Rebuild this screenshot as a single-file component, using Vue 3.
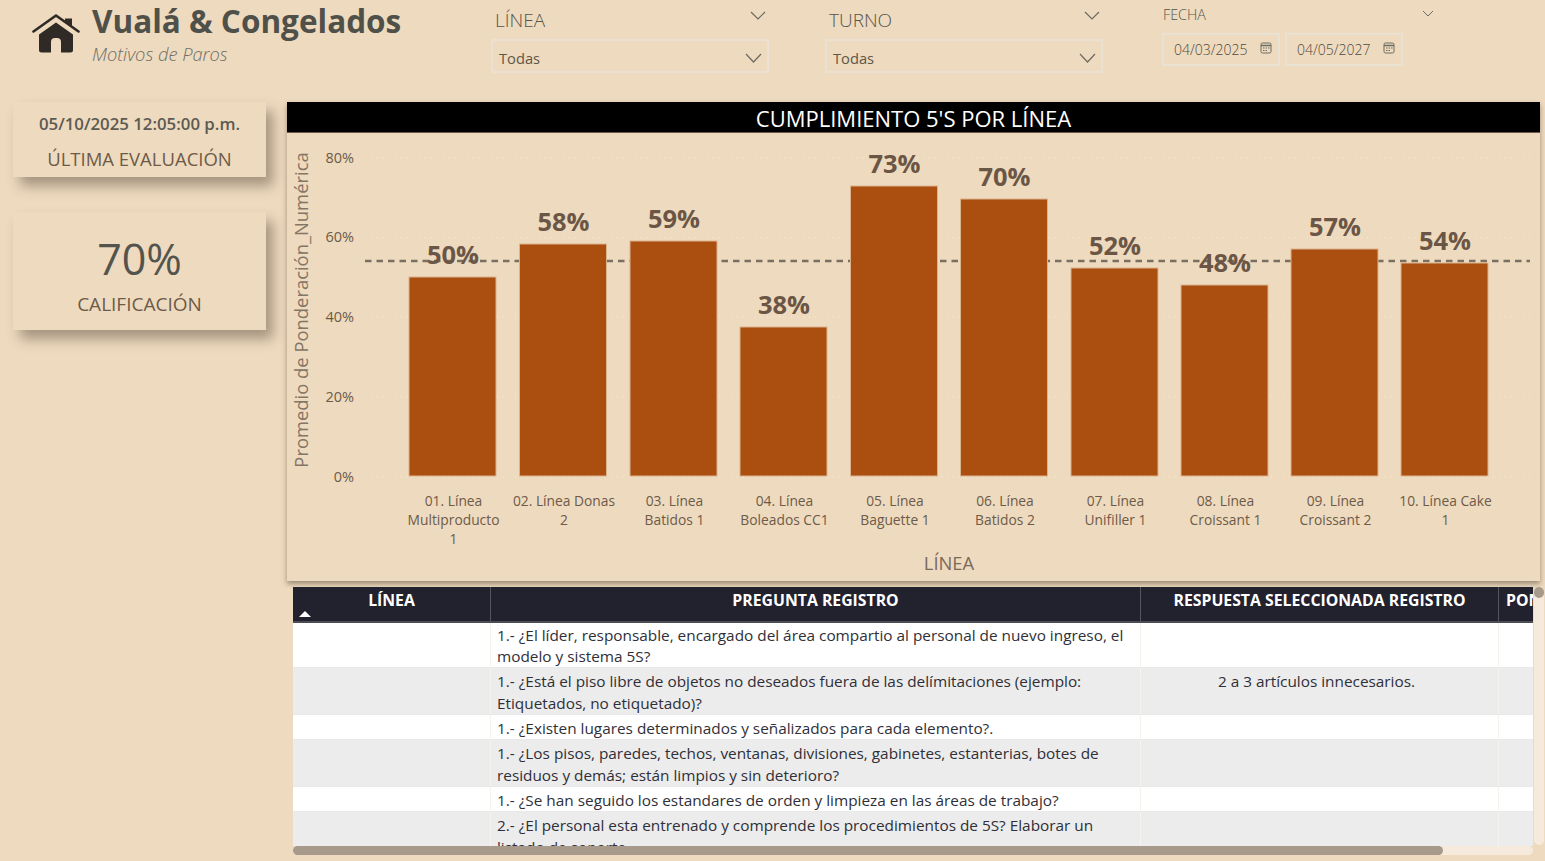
<template>
  <div class="page">
    <header class="top">
      <svg class="home" viewBox="0 0 48 42" width="48" height="42">
        <path d="M1.5 18.5 24 2.5l22.5 16" fill="none" stroke="#2f2a25" stroke-width="2.6" stroke-linecap="round" stroke-linejoin="round" />
        <path d="M33 5.500h7v9l-7-5z" fill="#2f2a25" />
        <path d="M7 21.500 24 9.500l17 12V37a2.500 2.500 0 0 1-2.500 2.500H29V29a4 4 0 0 0-4-4h-2a4 4 0 0 0-4 4v10.500H9.500A2.500 2.500 0 0 1 7 37z" fill="#2f2a25" />
      </svg>
      <div class="brand">
        <h1>Vualá &amp; Congelados</h1>
        <p>Motivos de Paros</p>
      </div>
      <div class="slicer" v-for="s in slicers" :key="s">
        <div class="slicer-head">
          <span>{{ s }}</span>
          <svg width="16" height="9" viewBox="0 0 16 9"><path d="M1 1l7 7 7-7" fill="none" stroke="#6b6b60" stroke-width="1.2" /></svg>
        </div>
        <div class="slicer-box">
          <span>Todas</span>
          <svg width="17" height="10" viewBox="0 0 17 10"><path d="M1 1l7.500 8L16 1" fill="none" stroke="#6b6b60" stroke-width="1.2" /></svg>
        </div>
      </div>
      <div class="dates">
        <div class="dates-head">
          <span>FECHA</span>
          <svg width="12" height="7" viewBox="0 0 12 7"><path d="M1 1l5 5 5-5" fill="none" stroke="#6b6b60" stroke-width="1" /></svg>
        </div>
        <div class="dates-row">
          <div class="date-box" v-for="d in dates" :key="d">
            <span>{{ d }}</span>
            <svg width="12" height="12" viewBox="0 0 12 12">
              <rect x="1" y="1" width="10" height="10" rx="1.500" fill="none" stroke="#6b6b60" />
              <path d="M1 3.500h10" stroke="#6b6b60" stroke-width="1.500" />
              <path d="M3 6h1.500M5.500 6H7M8 6h1.500M3 8.500h1.500M5.500 8.500H7" stroke="#6b6b60" />
            </svg>
          </div>
        </div>
      </div>
    </header>

    <main class="body">
      <aside class="side">
        <div class="card card-date">
          <strong>05/10/2025 12:05:00 p.m.</strong>
          <span>ÚLTIMA EVALUACIÓN</span>
        </div>
        <div class="card card-score">
          <b>70%</b>
          <span>CALIFICACIÓN</span>
        </div>
      </aside>

      <div class="content">
        <section class="chart">
          <h2>CUMPLIMIENTO 5'S POR LÍNEA</h2>
          <svg class="plot" width="1253" height="448" viewBox="0 0 1253 448">
            <text class="y-title" transform="translate(21 177) rotate(-90)" text-anchor="middle">Promedio de Ponderación_Numérica</text>
            <g v-for="t in ticks" :key="t.label">
              <line class="grid" x1="78" x2="1243" :y1="t.y" :y2="t.y" />
              <text class="tick" x="67" :y="t.y + 4.5" text-anchor="end">{{ t.label }}</text>
            </g>
            <line class="avg" x1="78" x2="1243" y1="128" y2="128" />
            <g v-for="b in bars" :key="b.x">
              <rect class="bar" :x="b.x" :y="b.top" width="87" :height="343 - b.top" />
              <text class="cat" v-for="(l, i) in b.lines" :key="l" :x="b.x + 44.5" :y="372.5 + i * 19" text-anchor="middle">{{ l }}</text>
            </g>
            <text class="val" v-for="b in bars" :key="b.value" :x="b.x + 44" :y="b.top - 13" text-anchor="middle">{{ b.value }}%</text>
            <text class="x-title" x="662" y="437" text-anchor="middle">LÍNEA</text>
          </svg>
        </section>

        <section class="table-wrap">
          <div class="table">
            <div class="row head">
              <div class="cell">LÍNEA<i class="sort"></i></div>
              <div class="cell">PREGUNTA REGISTRO</div>
              <div class="cell">RESPUESTA SELECCIONADA REGISTRO</div>
              <div class="cell clip">PONDERACIÓN</div>
            </div>
            <div class="row" v-for="(r, i) in rows" :key="i" :class="{ alt: i % 2 === 1, first: i === 0 }">
              <div class="cell"></div>
              <div class="cell">{{ r.q }}</div>
              <div class="cell answer">{{ r.a }}</div>
              <div class="cell"></div>
            </div>
          </div>
          <div class="hbar"><div class="hthumb"></div></div>
          <div class="vbar"><div class="vthumb"></div></div>
        </section>
      </div>
    </main>
  </div>
</template>

<script setup>
const slicers = ["LÍNEA", "TURNO"]
const dates = ["04/03/2025", "04/05/2027"]

const ticks = [
  { label: "80%", y: 25 },
  { label: "60%", y: 104.5 },
  { label: "40%", y: 184 },
  { label: "20%", y: 264 },
  { label: "0%", y: 344 },
]

const bars = [
  { x: 122, top: 144, value: 50, lines: ["01. Línea", "Multiproducto", "1"] },
  { x: 232.5, top: 111, value: 58, lines: ["02. Línea Donas", "2"] },
  { x: 343, top: 108, value: 59, lines: ["03. Línea", "Batidos 1"] },
  { x: 453, top: 194, value: 38, lines: ["04. Línea", "Boleados CC1"] },
  { x: 563.5, top: 53, value: 73, lines: ["05. Línea", "Baguette 1"] },
  { x: 673.5, top: 66, value: 70, lines: ["06. Línea", "Batidos 2"] },
  { x: 784, top: 135, value: 52, lines: ["07. Línea", "Unifiller 1"] },
  { x: 894, top: 152, value: 48, lines: ["08. Línea", "Croissant 1"] },
  { x: 1004, top: 116, value: 57, lines: ["09. Línea", "Croissant 2"] },
  { x: 1114, top: 130, value: 54, lines: ["10. Línea Cake", "1"] },
]

const rows = [
  { q: "1.- ¿El líder, responsable, encargado del área compartio al personal de nuevo ingreso, el modelo y sistema 5S?", a: "" },
  { q: "1.- ¿Está el piso libre de objetos no deseados fuera de las delímitaciones (ejemplo: Etiquetados, no etiquetado)?", a: "2 a 3 artículos innecesarios." },
  { q: "1.- ¿Existen lugares determinados y señalizados para cada elemento?.", a: "" },
  { q: "1.- ¿Los pisos, paredes, techos, ventanas, divisiones, gabinetes, estanterias, botes de residuos y demás; están limpios y sin deterioro?", a: "" },
  { q: "1.- ¿Se han seguido los estandares de orden y limpieza en las áreas de trabajo?", a: "" },
  { q: "2.- ¿El personal esta entrenado y comprende los procedimientos de 5S? Elaborar un listado de soporte.", a: "" },
]
</script>

<style>
html, body { margin: 0; background: #eedabf; }
</style>

<style scoped>
.page {
  width: 1545px;
  height: 861px;
  overflow: hidden;
  background: #eedabf;
  font-family: "Open Sans", "Noto Sans", sans-serif;
  color: #6d5a48;
}

.top {
  display: flex;
  height: 102px;
  box-sizing: border-box;
  padding-left: 32px;
}
.home { margin-top: 13px; flex: none; }
.brand { width: 399px; margin-left: 12px; flex: none; }
.brand h1 {
  margin: 0;
  font-size: 31.500px;
  line-height: 42px;
  font-weight: 700;
  color: #4f5049;
  white-space: nowrap;
}
.brand p {
  margin: 1px 0 0;
  font-size: 18.300px;
  line-height: 22px;
  font-style: italic;
  font-weight: 300;
  color: #6e6e66;
}

.slicer { width: 278px; margin-right: 56px; flex: none; }
.slicer-head {
  display: flex;
  justify-content: space-between;
  align-items: center;
  height: 39px;
  padding: 0 3px 0 4px;
  font-size: 19px;
  font-weight: 300;
  color: #55554c;
}
.slicer-head svg { margin: -8px 0 0; }
.slicer-box {
  display: flex;
  justify-content: space-between;
  align-items: center;
  height: 34px;
  box-sizing: border-box;
  padding: 3px 5px 0 6px;
  border: 2px solid #e9e2d3;
  font-size: 14.700px;
  color: #5f5647;
}

.dates { margin-left: 3px; width: 278px; flex: none; }
.dates-head {
  display: flex;
  justify-content: space-between;
  height: 33px;
  padding: 5px 6px 0 1px;
  box-sizing: border-box;
  font-size: 14.300px;
  font-weight: 300;
  color: #55554c;
}
.dates-head svg { margin-top: 5px; }
.dates-row { display: flex; gap: 5px; }
.date-box {
  display: flex;
  align-items: center;
  justify-content: space-between;
  width: 118px;
  height: 33px;
  box-sizing: border-box;
  padding: 0 6px 0 10px;
  border: 2px solid #e9e2d3;
  font-size: 14px;
  font-weight: 300;
  color: #4f4a3e;
}
.date-box svg { margin-top: -4px; }

.body { display: flex; }
.side {
  width: 287px;
  flex: none;
  box-sizing: border-box;
  padding-left: 13px;
}
.card {
  width: 253px;
  display: flex;
  flex-direction: column;
  align-items: center;
  background: #eedabf;
  box-shadow: 7px 9px 12px rgba(80, 65, 50, 0.45);
  text-align: center;
}
.card-date { height: 75px; }
.card-date strong {
  margin-top: 10px;
  font-size: 16.800px;
  line-height: 24px;
  font-weight: 600;
  color: #5c5a52;
}
.card-date span {
  margin-top: 11px;
  font-size: 18.500px;
  line-height: 24px;
}
.card-score { height: 118px; margin-top: 35px; }
.card-score b {
  margin-top: 18px;
  font-size: 43px;
  line-height: 58px;
  font-weight: 400;
  color: #54544e;
}
.card-score span {
  margin-top: 4px;
  font-size: 19px;
  line-height: 24px;
}

.content { width: 1253px; flex: none; }
.chart {
  height: 479px;
  background: #eedabf;
  box-shadow: 0 3px 5px rgba(80, 65, 50, 0.5);
}
.chart h2 {
  margin: 0;
  height: 31px;
  background: #000;
  border-bottom: 1px solid #6d5a48;
  box-sizing: border-box;
  color: #fff;
  font-size: 22px;
  font-weight: 400;
  line-height: 33px;
  text-align: center;
}
.plot { display: block; }
.y-title { font-size: 18.400px; fill: #857565; }
.tick { font-size: 14.500px; fill: #6d5a48; }
.cat { font-size: 13.800px; fill: #6d5a48; }
.x-title { font-size: 18.400px; fill: #7a6a5a; }
.val { font-size: 25.500px; font-weight: 700; fill: #6b5645; }
.grid { stroke: #f6ecdc; stroke-width: 1; stroke-dasharray: 1 5; }
.avg { stroke: #7a6f60; stroke-width: 2.500; stroke-dasharray: 6.500 5; }
.bar { fill: #ab4f10; stroke: #dcb38f; stroke-width: 1; }

.table-wrap {
  position: relative;
  height: 269px;
  margin: 6px 0 0 6px;
}
.table {
  width: 1240px;
  height: 259px;
  overflow: hidden;
  background: #ececec;
  font-size: 15.350px;
  line-height: 22px;
  color: #2f2f38;
}
.row {
  display: grid;
  grid-template-columns: 198px 650px 358px 34px;
  background: #fff;
  border-bottom: 1px solid #e9e9e9;
}
.row.alt { background: #ececec; }
.row.first { line-height: 21px; }
.cell {
  box-sizing: border-box;
  padding: 2px 12px 0 6px;
  border-right: 1px solid #f6f3ec;
}
.cell:last-child { border-right: none; }
.answer { text-align: center; }
.head {
  height: 36px;
  background: #22212e;
  border-bottom: 2px solid #4c4c55;
  color: #fff;
  font-weight: 700;
  box-sizing: border-box;
  font-size: 15.800px;
}
.head .cell {
  position: relative;
  padding: 2px 0 0;
  text-align: center;
  border-right: 1px solid #55555e;
  white-space: nowrap;
  overflow: hidden;
}
.head .clip { padding-left: 7px; text-align: left; border-right: none; }
.sort {
  position: absolute;
  left: 6px;
  bottom: 4px;
  border-left: 6px solid transparent;
  border-right: 6px solid transparent;
  border-bottom: 6px solid #fff;
}

.hbar {
  position: absolute;
  left: 0;
  top: 259px;
  width: 1240px;
  height: 9px;
  background: #f5eadc;
  border-radius: 5px;
}
.hthumb { width: 1150px; height: 9px; background: #a89a8a; border-radius: 5px; }
.vbar {
  position: absolute;
  left: 1241px;
  top: 0;
  width: 10px;
  height: 258px;
  background: #f5eadc;
  border-radius: 5px;
}
.vthumb { width: 10px; height: 11px; background: #a89a8a; border-radius: 5px; }
</style>
